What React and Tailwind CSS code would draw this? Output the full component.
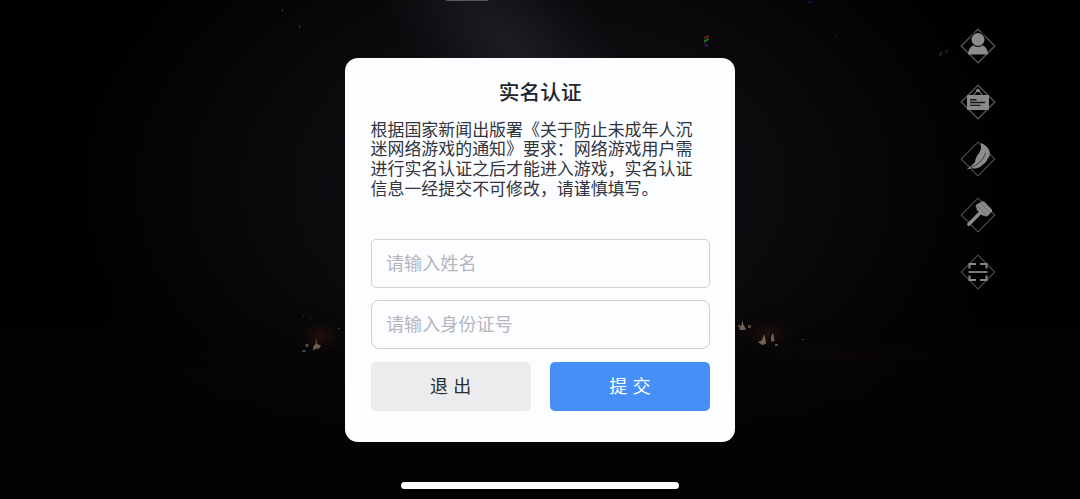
import { useState } from 'react';

const NOTICE = [
  '根据国家新闻出版署《关于防止未成年人沉',
  '迷网络游戏的通知》要求：网络游戏用户需',
  '进行实名认证之后才能进入游戏，实名认证',
  '信息一经提交不可修改，请谨慎填写。',
];

const DiamondIcon = ({ label, thin, children }) => (
  <button type="button" aria-label={label} className="block h-9 w-9">
    <svg viewBox="0 0 36 36" className="h-9 w-9">
      <path
        d="M18 1.2 34.800 18 18 34.800 1.200 18Z"
        fill="none"
        stroke={thin ? '#484848' : '#505050'}
        strokeWidth={thin ? 1.2 : 1.5}
      />
      {children}
    </svg>
  </button>
);

const SideMenu = () => (
  <nav className="flex flex-col gap-[20.5px] pt-[27.5px] pr-[84.5px]">
    <DiamondIcon label="账号">
      <path d="M8 26.500c.3-5 2.700-8.300 6-9.500h8c3.400 1.200 5.800 4.500 6 9.500Z" fill="#8c8c8c" />
      <circle cx="18" cy="11.500" r="7.400" fill="#060606" />
      <circle cx="18" cy="11.500" r="6.500" fill="#8c8c8c" />
    </DiamondIcon>
    <DiamondIcon label="公告">
      <path d="m13.500 11.500 4.500-6 4.500 6" fill="none" stroke="#777" strokeWidth="1.100" />
      <circle cx="18" cy="6.500" r="1.700" fill="#888" />
      <rect x="7" y="11" width="22" height="15" rx=".8" fill="#8a8a8a" />
      <path d="M10 15.700h6.500M10 18.500h15M10 21.400h10.500" stroke="#171717" strokeWidth="1.400" />
    </DiamondIcon>
    <DiamondIcon label="羽毛" thin>
      <path
        d="M20.700 2C26 4 30 8 30 13l-.7 2.500-1.800 2.500-1.500 3-3 2.500-3 2.500-4 1.500-4.500-.3L6.500 28.500l5-4 3.500-3.500c.5-3.500 1.500-6 3.700-8.500C21 9.500 21.500 6 20.700 2Z"
        fill="#8c8c8c"
      />
      <path d="M10.500 26.700C17.500 24 23.500 19 25.500 12" fill="none" stroke="#303030" strokeWidth=".9" />
    </DiamondIcon>
    <DiamondIcon label="修复" thin>
      <path d="M8.800 27.300 19.500 16.500" stroke="#8c8c8c" strokeWidth="3.400" strokeLinecap="round" />
      <path d="m22.300 4.300 1.800.2 8 8.300-.2 2-4.600 4.500-2 .2-1.200-1-1.600.3-6-6.200.2-1.500-1-1.300.1-1.700Z" fill="#8c8c8c" />
      <path d="m20.700 6.200 9.200 9.500M17.500 9.200l9 9" stroke="#555" strokeWidth=".7" />
    </DiamondIcon>
    <DiamondIcon label="扫码" thin>
      <path
        d="M9.500 14.500v-4.500H16M20 10h6.500v4.500M26.500 21.500V26H20M16 26H9.500v-4.500"
        fill="none"
        stroke="#888"
        strokeWidth="2"
      />
      <path d="M8.500 18h19" stroke="#888" strokeWidth="1.800" />
    </DiamondIcon>
  </nav>
);

// candle groups and stray sparks, drawn over the dark scene
const Scene = () => (
  <svg viewBox="0 0 1080 499" className="absolute inset-0 h-full w-full" aria-hidden="true">
    <defs>
      <radialGradient id="haze">
        <stop offset="0" stopColor="#111216" />
        <stop offset=".5" stopColor="#0b0b0e" />
        <stop offset="1" stopColor="#000" />
      </radialGradient>
      <radialGradient id="beam">
        <stop offset="0" stopColor="#1f2126" stopOpacity=".85" />
        <stop offset=".45" stopColor="#1b1c21" stopOpacity=".55" />
        <stop offset="1" stopColor="#15161a" stopOpacity="0" />
      </radialGradient>
      <radialGradient id="glow">
        <stop offset="0" stopColor="#3c1a0c" stopOpacity=".5" />
        <stop offset="1" stopColor="#180a04" stopOpacity="0" />
      </radialGradient>
      <linearGradient id="ground" x1="0" y1="0" x2="0" y2="1">
        <stop offset="0" stopColor="#050404" stopOpacity="0" />
        <stop offset=".4" stopColor="#060404" stopOpacity=".7" />
        <stop offset="1" stopColor="#030202" />
      </linearGradient>
    </defs>
    <rect width="1080" height="499" fill="#000" />
    <ellipse cx="540" cy="185" rx="480" ry="330" fill="url(#haze)" />
    <ellipse cx="510" cy="45" rx="190" ry="85" fill="url(#beam)" transform="rotate(45 510 45)" />
    <rect y="290" width="1080" height="209" fill="url(#ground)" />
    <ellipse cx="320" cy="336" rx="26" ry="18" fill="url(#glow)" />
    <ellipse cx="768" cy="334" rx="30" ry="16" fill="url(#glow)" />
    <ellipse cx="850" cy="353" rx="115" ry="12" fill="url(#glow)" opacity=".2" />
    <g fill="#715f50">
      <path d="m316 338 1 6 4 1.500-2 3-4 .5-2 2 .5-5 2-2Z" />
      <path d="m742.500 320 1 5 2 3v2h-6v-3l2-2Z" />
      <path d="m764 334 1.500 5 .5 5-4 1-4-3 4-2Z" />
      <path d="m773 333 1 4 .5 4-3.500.5v-5Z" />
      <path d="M305.500 344h3v3h-3zM302.500 350h3v2h-3zM748 325h3v3h-3zM738 325h2v2h-2zM775 344h3v2h-3z" opacity=".75" />
    </g>
    <g fill="#3a342e">
      <path d="M303 315h1v1h-1zM310 318h1v1h-1zM338 328h2v1h-2zM282 9h1v3h-1zM299 25h1v3h-1zM836 36h1v1h-1zM802 339h2v1h-2z" />
    </g>
    <path d="m704 37 5-2v2l-5 2Z" fill="#702019" />
    <path d="m704 40 5-2v2l-5 3Z" fill="#2c6134" />
    <path d="M704 44h4v3h-3Z" fill="#2c124b" />
    <path d="m939 54 3-3v3l-2 3Z" fill="#123817" />
    <path d="m945 51 3-2v3l-3 2Z" fill="#361013" />
    <path d="M808 1h5v2h-5Z" fill="#100d38" />
    <path d="M446 0h42v1h-42Z" fill="#57595b" />
  </svg>
);

const inputClass =
  'block h-[49px] w-full border-[1.5px] border-[#cfd0d3] bg-transparent pr-4 pb-[3px] pl-[14.5px] text-[18.1px] text-[#282c34] outline-none placeholder:text-[#b4b6bc]';

const buttonClass = 'h-[49px] rounded-[5px] pb-[2px] text-[18px] [word-spacing:1px]';

export default function App() {
  const [name, setName] = useState('');
  const [idNumber, setIdNumber] = useState('');

  return (
    <div className="relative h-[499px] w-[1080px] overflow-hidden bg-black font-['Noto_Sans_CJK_SC',sans-serif]">
      <Scene />

      <main className="relative grid h-full grid-cols-[1fr_390px_1fr]">
        <form
          onSubmit={(e) => e.preventDefault()}
          className="col-start-2 h-[384px] self-center rounded-[13px] bg-[#fcfdff] pt-[18px] pr-[25px] pl-[25.5px]"
        >
          <h1 className="text-center text-[20.7px] leading-[30px] font-medium text-[#22262e]">实名认证</h1>
          <p className="mt-[13px] h-[120px] text-[16.95px] leading-[19.8px] whitespace-nowrap text-[#30343c]">
            {NOTICE.map((line) => (
              <span key={line} className="block">{line}</span>
            ))}
          </p>

          <input
            value={name}
            onChange={(e) => setName(e.target.value)}
            placeholder="请输入姓名"
            className={`${inputClass} rounded-[5px]`}
          />
          <input
            value={idNumber}
            onChange={(e) => setIdNumber(e.target.value)}
            placeholder="请输入身份证号"
            className={`${inputClass} mt-[12.5px] rounded-[8px]`}
          />

          <div className="mt-[12.5px] grid grid-cols-2 gap-[19px]">
            <button type="button" className={`${buttonClass} bg-[#ebecee] text-[#282c34]`}>
              退 出
            </button>
            <button type="submit" className={`${buttonClass} bg-[#458ff7] text-white`}>
              提 交
            </button>
          </div>
        </form>

        <div className="flex items-start justify-end">
          <SideMenu />
        </div>
      </main>

      {/* Home indicator */}
      <div className="absolute bottom-[10px] left-[401px] h-[7px] w-[278px] rounded-full bg-white" />
    </div>
  );
}
